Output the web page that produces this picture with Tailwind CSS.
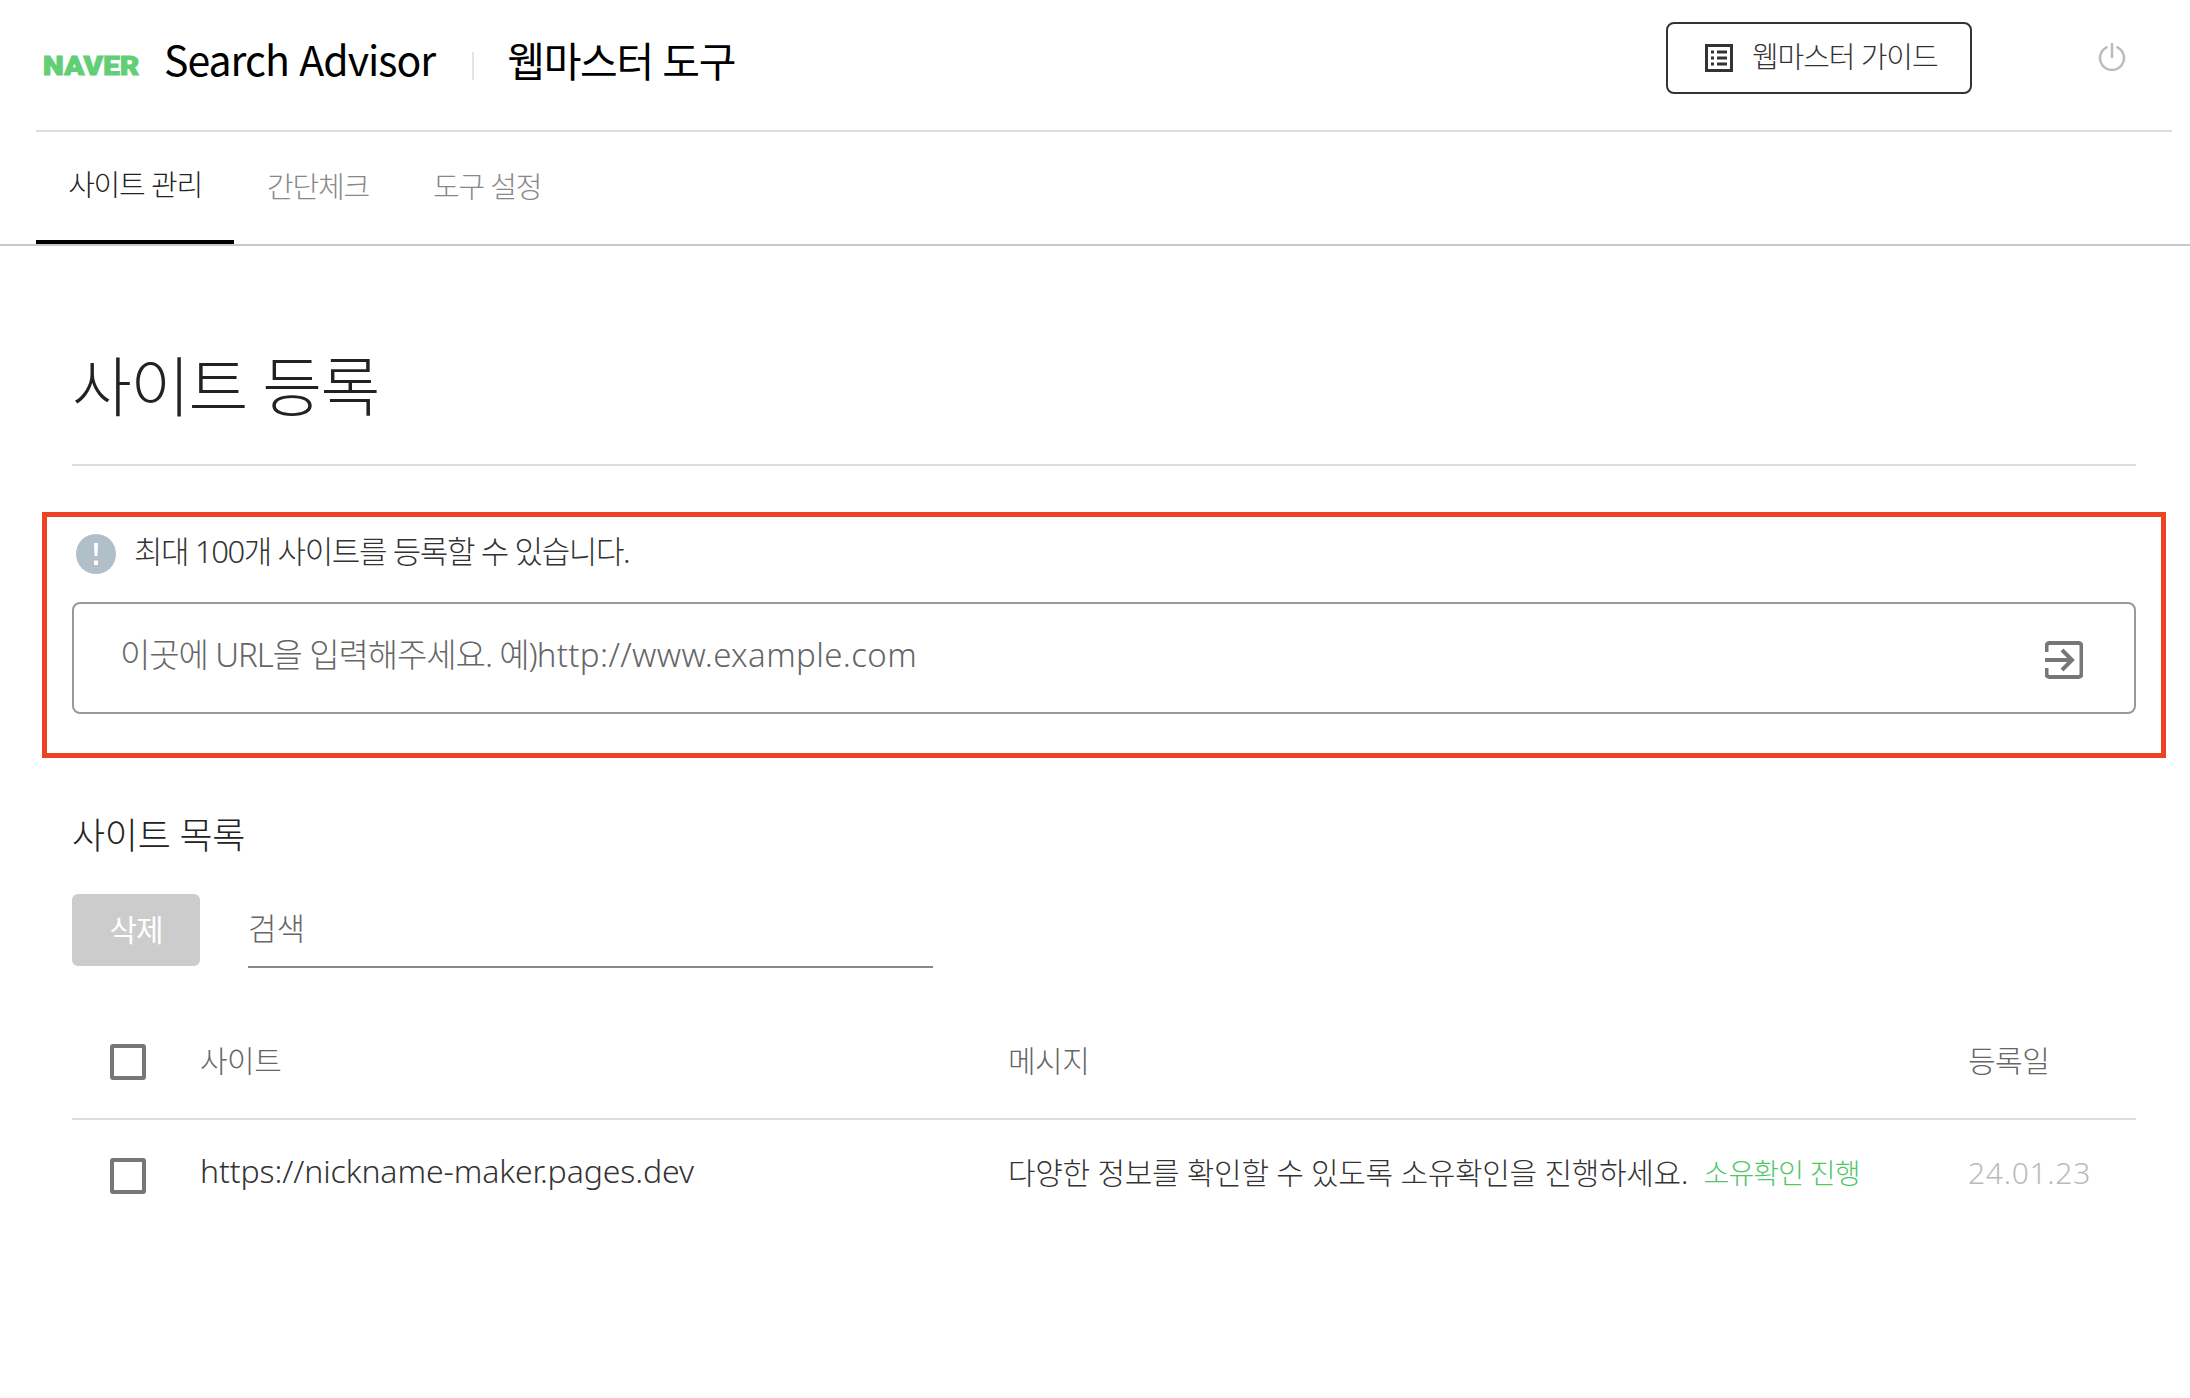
<!DOCTYPE html>
<html lang="ko">
<head>
<meta charset="utf-8">
<script src="https://cdn.jsdelivr.net/npm/@tailwindcss/browser@4"></script>
</head>
<body class="bg-white font-['Noto_Sans','Noto_Sans_CJK_KR',sans-serif] font-light text-[#333] overflow-hidden">
<div class="w-[2190px] h-[1398px]">
  <header class="ml-9 mr-[18px] h-[132px] border-b-2 border-[#ddd] flex items-center pl-[7px] pb-[2px]">
    <span class="w-[96px] font-['Roboto',sans-serif] font-black text-[25px] leading-none text-[#62cf75] tracking-[0.2px] scale-x-[1.18] origin-left [-webkit-text-stroke:1px_#62cf75] translate-y-[2px]">NAVER</span>
    <span class="ml-[25px] text-[41px] leading-none text-black font-normal tracking-[-1px] font-['Noto_Sans_CJK_KR',sans-serif] -translate-y-[6px]">Search Advisor</span>
    <span class="ml-[37px] w-[2px] h-[28px] bg-[#e4e4e4] mt-1"></span>
    <span class="ml-[33px] text-[41px] leading-none text-black font-normal tracking-[-1.3px] -translate-y-[3px]">웹마스터 도구</span>
    <a class="ml-auto w-[306px] h-[72px] border-2 border-[#333] rounded-lg flex items-center pl-[37px] gap-[19px] -translate-y-[6px]">
      <svg class="w-[28px] h-[28px]" viewBox="0 0 28 28" fill="none" stroke="#333">
        <rect x="1.500" y="1.500" width="25" height="25" stroke-width="3"/>
        <path d="M6 8h3M12 8h10M6 14h3M12 14h10M6 20h3M12 20h10" stroke-width="3"/>
      </svg>
      <span class="text-[29px] leading-none text-[#333] tracking-[-1.1px] -translate-y-[2px]">웹마스터 가이드</span>
    </a>
    <svg class="ml-[126px] mr-[46px] w-[28px] h-[28px] -translate-y-[7px]" viewBox="0 0 28 28" fill="none" stroke="#bbb" stroke-width="2.500" stroke-linecap="round">
      <path d="M14 1v13"/>
      <path d="M8.500 4.300A12 12 0 1 0 19.500 4.300" />
    </svg>
  </header>

  <nav class="h-[114px] border-b-2 border-[#c8c8c8] pl-9 flex">
    <a class="h-[112px] w-[198px] border-b-4 border-black flex items-center justify-center text-[29px] text-[#222] tracking-[-1.2px] pb-[2px]">사이트 관리</a>
    <a class="h-[112px] ml-[33px] flex items-center text-[29px] text-[#888] tracking-[-1.2px] pb-[2px]">간단체크</a>
    <a class="h-[112px] ml-[64px] flex items-center text-[29px] text-[#888] tracking-[-1.2px] pb-[2px]">도구 설정</a>
  </nav>

  <main class="pl-[72px] pr-[54px]">
    <div class="h-[220px] border-b-2 border-[#ddd] flex items-center pt-[68px] pb-[5px]">
      <h1 class="text-[65px] leading-none font-light text-[#222] tracking-[-1.5px]">사이트 등록</h1>
    </div>

    <section class="relative pt-[68px] h-[293px]">
      <div class="flex items-center h-[40px]">
        <span class="w-[40px] h-[40px] ml-1 rounded-full bg-[#b1bfc8] flex items-center justify-center">
          <svg width="6" height="24" viewBox="0 0 6 24"><path d="M1 1h4l-.6 13H1.600z M1 18.500h4V23H1z" fill="#fff"/></svg>
        </span>
        <span class="ml-[18px] text-[31px] leading-none text-[#333] tracking-[-1.4px] -translate-y-[3px]">최대 100개 사이트를 등록할 수 있습니다.</span>
      </div>
      <div class="mt-7 h-[112px] border-2 border-[#999] rounded-lg flex items-center pl-[46px] pr-[51px]">
        <div class="flex-1 text-[33px] font-light tracking-[-1.1px] text-[#666] -translate-y-[3px] whitespace-nowrap">이곳에 URL을 입력해주세요. 예)<span class="tracking-[0.37px]">http://www.example.com</span></div>
        <svg class="w-[38px] h-[38px] translate-y-[2px]" viewBox="0 0 38 38" fill="none" stroke="#777" stroke-width="4">
          <path d="M1.500 11V5a3 3 0 0 1 3-3h29a3 3 0 0 1 3 3v28a3 3 0 0 1-3 3h-29a3 3 0 0 1-3-3v-6"/>
          <path d="M0 19h25M17 9l10 10-10 10"/>
        </svg>
      </div>
      <div class="absolute left-[-30px] right-[-30px] top-[46px] h-[246px] border-[5px] border-[#ee4225] pointer-events-none"></div>
    </section>

    <h2 class="mt-[52px] text-[36px] leading-[50px] font-light text-[#222] tracking-[-0.3px]">사이트 목록</h2>

    <div class="mt-[33px] flex items-start">
      <button class="w-[128px] h-[72px] bg-[#ccc] rounded-md text-white text-[30px] font-normal tracking-[-1px] pb-[2px]">삭제</button>
      <div class="ml-[48px] w-[685px] h-[74px] border-b-2 border-[#888] flex items-center text-[31px] text-[#666] pb-[4px]">검색</div>
    </div>

    <div class="mt-[38px] h-[114px] border-b-2 border-[#ddd] grid grid-cols-[128px_808px_960px_1fr] items-center text-[30px] text-[#666]">
      <span class="ml-[38px] w-[36px] h-[36px] border-[4px] border-[#777] rounded-[3px]"></span>
      <span class="tracking-[-0.5px] -translate-y-[2px]">사이트</span>
      <span class="tracking-[-0.5px] -translate-y-[2px]">메시지</span>
      <span class="tracking-[-0.5px] -translate-y-[2px]">등록일</span>
    </div>
    <div class="h-[112px] grid grid-cols-[128px_808px_960px_1fr] items-center text-[#333]">
      <span class="ml-[38px] w-[36px] h-[36px] border-[4px] border-[#777] rounded-[3px]"></span>
      <span class="text-[32px] tracking-[-0.1px] -translate-y-[5px] whitespace-nowrap">https://nickname-maker.pages.dev</span>
      <span class="text-[30px] tracking-[-0.3px] whitespace-nowrap -translate-y-[4px]">다양한 정보를 확인할 수 있도록 소유확인을 진행하세요. <a class="ml-[8px] text-[28px] tracking-[-0.8px] text-[#4fc767]">소유확인 진행</a></span>
      <span class="text-[30px] text-[#bbb] tracking-[0.7px] -translate-y-[4px]">24.01.23</span>
    </div>
  </main>
</div>
</body>
</html>
